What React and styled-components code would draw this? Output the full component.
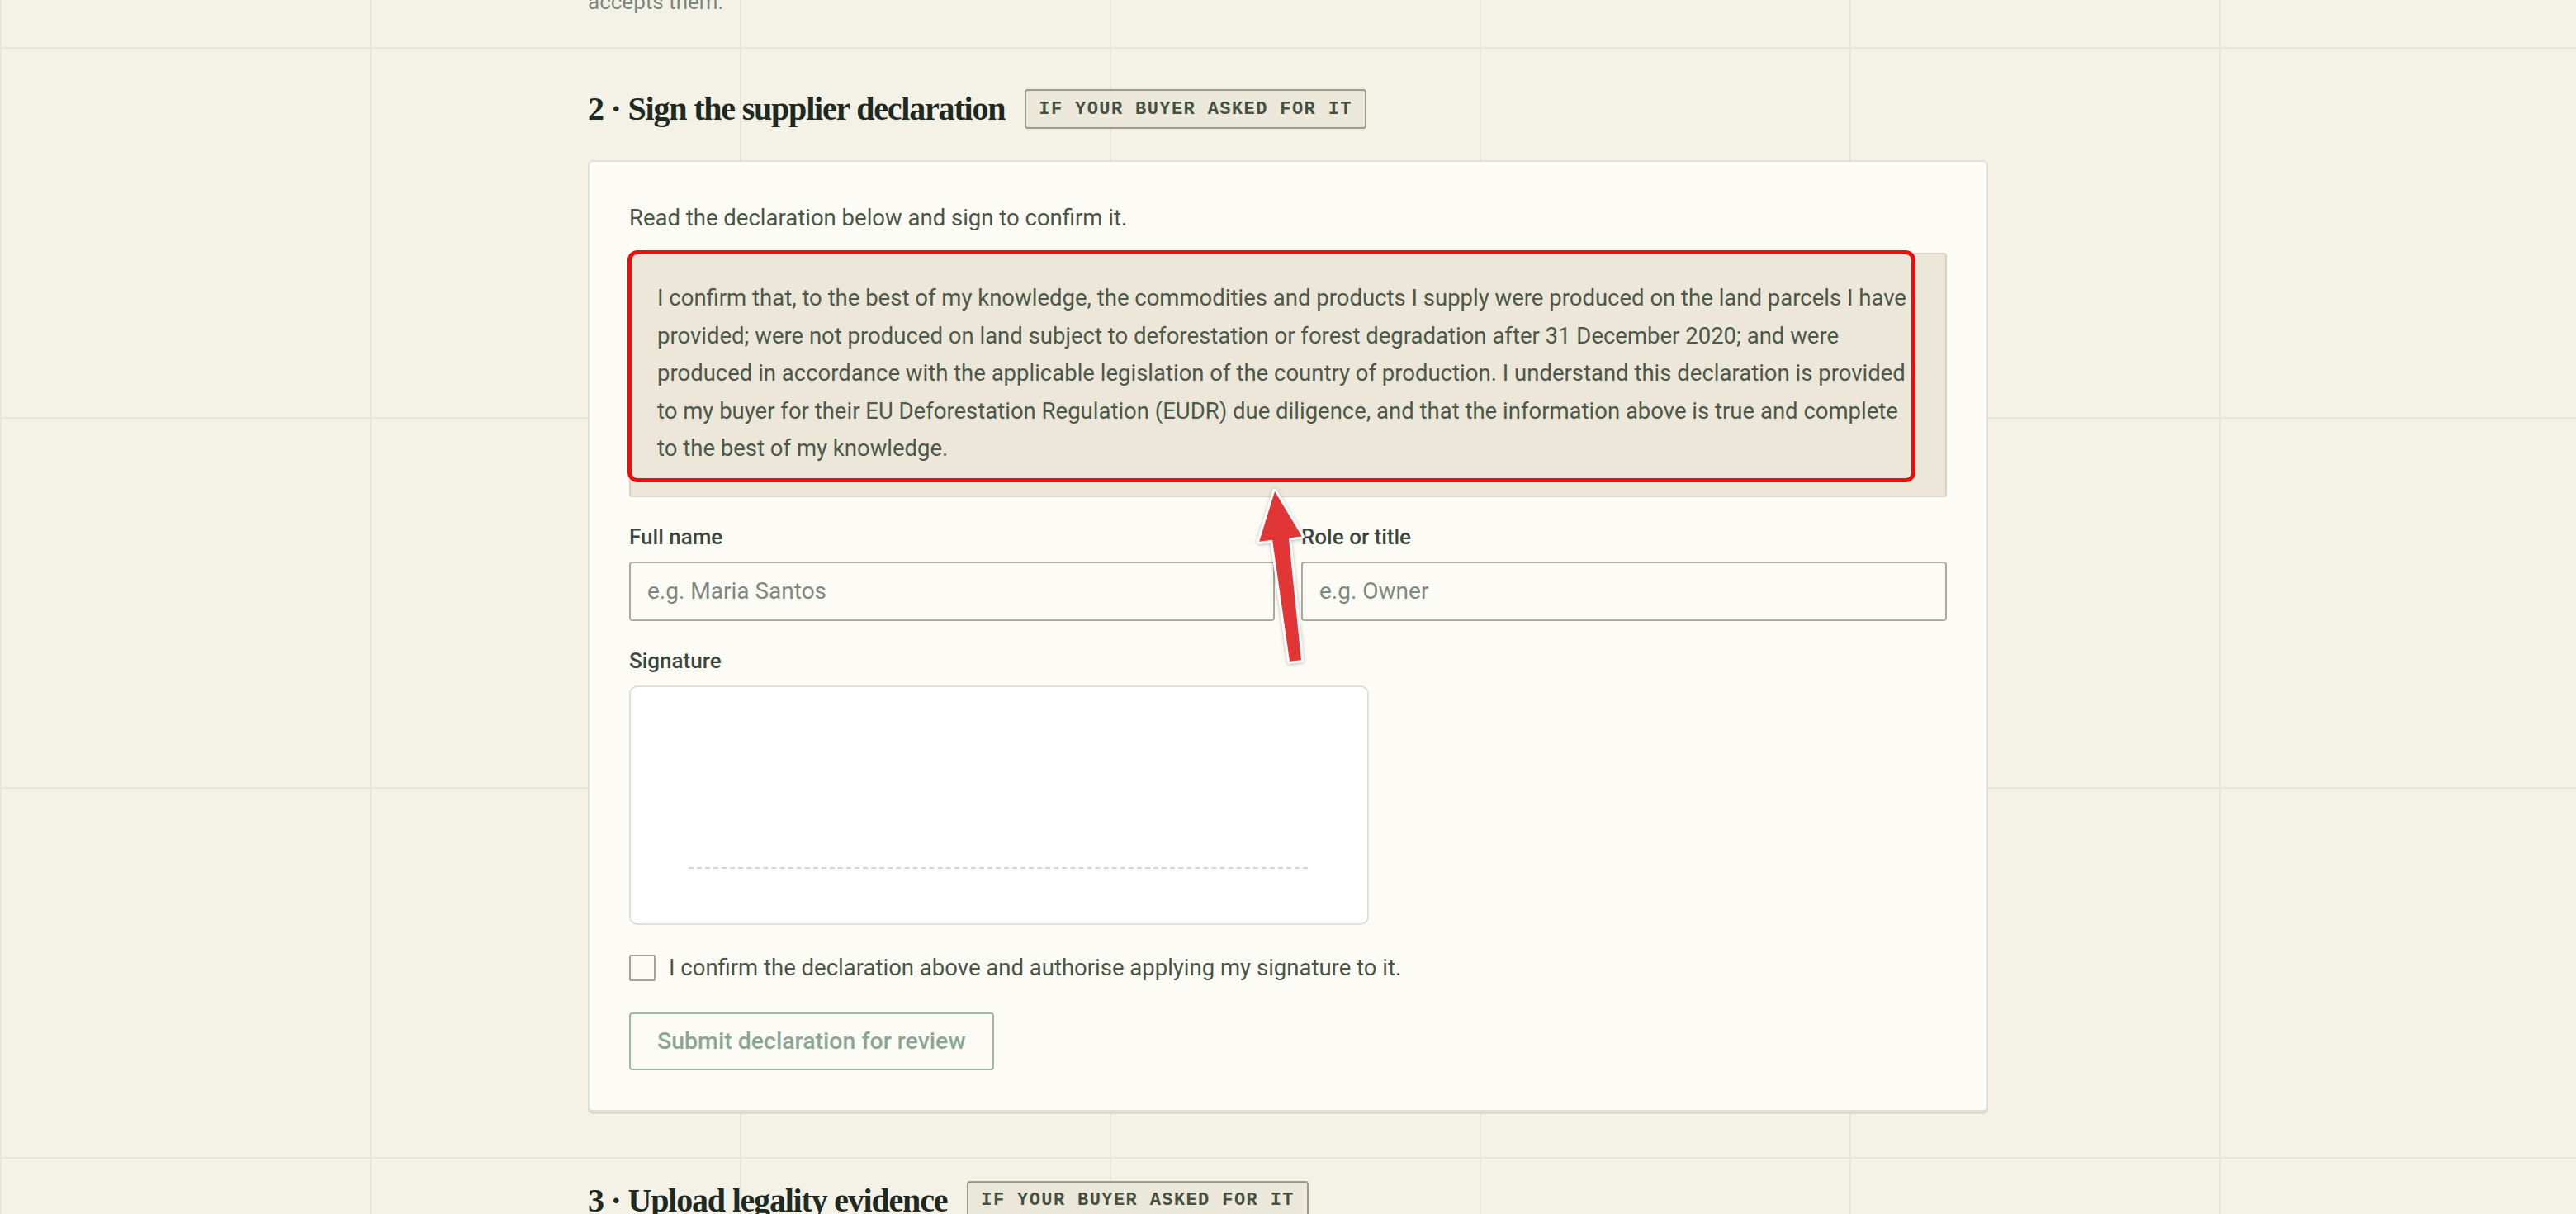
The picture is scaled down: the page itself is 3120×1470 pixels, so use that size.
import React from 'react'
import styled, { createGlobalStyle } from 'styled-components'

const GlobalStyle = createGlobalStyle`
  html, body {
    margin: 0;
    padding: 0;
  }

  body {
    min-height: 100vh;
    overflow: hidden;
    font-family: 'Roboto', 'Liberation Sans', sans-serif;
    background-color: #f4f1e7;
    background-image:
      linear-gradient(to right, #e9e5d9 2px, transparent 2px),
      linear-gradient(to bottom, #e9e5d9 2px, transparent 2px);
    background-size: 448px 448px;
    background-position: 0 57px;
  }
`

const Page = styled.main`
  width: 1696px;
  margin-left: calc(50% - 848px);
  padding-bottom: 240px;
`

const Lead = styled.p`
  margin: -16px 0 0;
  font-size: 26px;
  line-height: 36px;
  color: #7c887e;
`

const SectionHead = styled.div`
  display: flex;
  align-items: center;
  gap: 24px;
  margin-top: ${p => p.$top}px;
`

const SectionTitle = styled.h2`
  margin: 0;
  font-family: 'Liberation Serif', 'DejaVu Serif', serif;
  font-weight: 700;
  font-size: 40px;
  line-height: 48px;
  letter-spacing: -1.2px;
  color: #1e2a21;
`

const Badge = styled.span`
  display: inline-flex;
  align-items: center;
  height: 48px;
  box-sizing: border-box;
  padding: 0 15px;
  background: #ebe7d9;
  border: 2px solid #9c9b89;
  border-radius: 4px;
  font-family: 'Liberation Mono', 'DejaVu Sans Mono', monospace;
  font-weight: 700;
  font-size: 22px;
  letter-spacing: 1.4px;
  color: #465144;
`

const Card = styled.section`
  position: relative;
  margin-top: 38px;
  padding: 48px;
  background: #fdfbf5;
  border: 2px solid #e3e0d6;
  border-radius: 6px;
  box-shadow: 0 3px 0 #dcd9cf;
`

const Intro = styled.p`
  margin: 0 0 22px;
  font-size: 27.5px;
  line-height: 40px;
  color: #4a5548;
`

const DeclarationWrap = styled.div`
  position: relative;
`

const Declaration = styled.p`
  margin: 0;
  padding: 30px 32px 34px;
  background: #ece7d8;
  border: 2px solid #d7d2c3;
  border-radius: 4px;
  font-size: 27.5px;
  line-height: 45.5px;
  color: #4c584b;
  white-space: nowrap;
`

const Highlight = styled.div`
  position: absolute;
  left: -2px;
  top: -3px;
  right: 38px;
  bottom: 18px;
  border: 5px solid #f00c0c;
  border-radius: 12px;
  pointer-events: none;
`

const Arrow = styled.svg`
  position: absolute;
  left: 803px;
  top: 387px;
  width: 90px;
  height: 232px;
  overflow: visible;
  filter: drop-shadow(0 1px 2px rgba(0, 0, 0, 0.25));
  pointer-events: none;
`

const FieldRow = styled.div`
  display: grid;
  grid-template-columns: 1fr 1fr;
  gap: 32px;
  margin-top: 34px;
`

const Field = styled.label`
  display: flex;
  flex-direction: column;
  gap: 16px;
  margin-top: ${p => p.$top || 0}px;
`

const Label = styled.span`
  font-size: 26px;
  font-weight: 500;
  line-height: 28px;
  color: #3c483e;
`

const Input = styled.input`
  height: 72px;
  box-sizing: border-box;
  padding: 0 20px;
  background: #fdfbf5;
  border: 2px solid #aba99d;
  border-radius: 4px;
  font-family: 'Roboto', 'Liberation Sans', sans-serif;
  font-size: 28px;
  color: #2f3a31;

  &::placeholder {
    color: #7d897f;
  }
`

const SignaturePad = styled.div`
  display: flex;
  align-items: flex-end;
  width: 896px;
  height: 290px;
  box-sizing: border-box;
  padding: 0 72px 66px 70px;
  background: #ffffff;
  border: 2px solid #e1ded6;
  border-radius: 10px;
`

const SignLine = styled.div`
  flex: 1;
  border-top: 2px dashed #d6d5ce;
`

const CheckRow = styled.label`
  display: flex;
  align-items: center;
  gap: 16px;
  margin-top: 32px;
  font-size: 27.5px;
  line-height: 40px;
  color: #4a5548;
`

const CheckBox = styled.span`
  width: 32px;
  height: 32px;
  box-sizing: border-box;
  border: 2px solid #a3a297;
  border-radius: 2px;
  background: #fdfbf5;
`

const SubmitButton = styled.button`
  display: block;
  margin-top: 34px;
  height: 70px;
  padding: 0 32px;
  background: transparent;
  border: 2px solid #9db8a7;
  border-radius: 4px;
  font-family: 'Roboto', 'Liberation Sans', sans-serif;
  font-weight: 500;
  font-size: 28.5px;
  color: #8aa794;
  cursor: not-allowed;
`

const declarationLines = [
  'I confirm that, to the best of my knowledge, the commodities and products I supply were produced on the land parcels I have',
  'provided; were not produced on land subject to deforestation or forest degradation after 31 December 2020; and were',
  'produced in accordance with the applicable legislation of the country of production. I understand this declaration is provided',
  'to my buyer for their EU Deforestation Regulation (EUDR) due diligence, and that the information above is true and complete',
  'to the best of my knowledge.'
]

function App () {
  return (
    <>
      <GlobalStyle />
      <Page>
        <Lead>accepts them.</Lead>

        <SectionHead $top={88}>
          <SectionTitle>2 · Sign the supplier declaration</SectionTitle>
          <Badge>IF YOUR BUYER ASKED FOR IT</Badge>
        </SectionHead>

        <Card>
          <Intro>Read the declaration below and sign to confirm it.</Intro>

          <DeclarationWrap>
            <Declaration>
              {declarationLines.map((line, i) => (
                <React.Fragment key={i}>
                  {line}
                  {i < declarationLines.length - 1 && <br />}
                </React.Fragment>
              ))}
            </Declaration>
            <Highlight />
          </DeclarationWrap>

          <FieldRow>
            <Field>
              <Label>Full name</Label>
              <Input placeholder="e.g. Maria Santos" />
            </Field>
            <Field>
              <Label>Role or title</Label>
              <Input placeholder="e.g. Owner" />
            </Field>
          </FieldRow>

          <Field $top={34}>
            <Label>Signature</Label>
            <SignaturePad>
              <SignLine />
            </SignaturePad>
          </Field>

          <CheckRow>
            <CheckBox />
            I confirm the declaration above and authorise applying my signature to it.
          </CheckRow>

          <SubmitButton disabled>Submit declaration for review</SubmitButton>

          <Arrow viewBox="0 0 90 232">
            <polygon
              points="27,12 59.8,66.5 43.9,68.4 59,216.2 45,217.8 24.1,70.8 8.2,72.7"
              fill="#e23636"
              stroke="#ffffff"
              strokeWidth="6"
              strokeLinejoin="round"
              paintOrder="stroke"
            />
          </Arrow>
        </Card>

        <SectionHead $top={84}>
          <SectionTitle>3 · Upload legality evidence</SectionTitle>
          <Badge>IF YOUR BUYER ASKED FOR IT</Badge>
        </SectionHead>
      </Page>
    </>
  )
}

export default App
